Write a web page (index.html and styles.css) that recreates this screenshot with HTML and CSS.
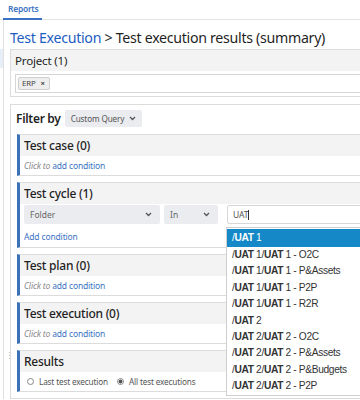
FILE: index.html
```html
<!DOCTYPE html>
<html>
<head>
<meta charset="utf-8">
<link rel="stylesheet" href="styles.css">
</head>
<body>
<div class="tabs"><span class="tab">Reports</span></div>
<div class="layout">
  <div class="sidebar"><div class="side-sel"></div><div class="grip">⋮</div></div>
  <div class="main">
    <h1 class="title"><span class="crumb">Test Execution</span> &gt; Test execution results (summary)</h1>
    <div class="panel project">
      <div class="panel-head">Project (1)</div>
      <div class="project-body">
        <div class="tag-input"><span class="tag">ERP <span class="x">×</span></span></div>
      </div>
    </div>
    <div class="panel filter">
      <div class="filter-head">
        <span class="filter-label">Filter by</span>
        <span class="btn">Custom Query <svg class="chev" width="7" height="5" viewBox="0 0 7 5"><path d="M1 1l2.5 2.5L6 1" fill="none" stroke="#555" stroke-width="1.3"/></svg></span>
      </div>
      <div class="cond">
        <div class="cond-head">Test case (0)</div>
        <div class="cond-body"><span class="hint">Click to</span> <a class="link">add condition</a></div>
      </div>
      <div class="cond">
        <div class="cond-head">Test cycle (1)</div>
        <div class="cycle-body">
          <div class="row">
            <div class="select folder">Folder<svg class="chev" width="7" height="5" viewBox="0 0 7 5"><path d="M1 1l2.5 2.5L6 1" fill="none" stroke="#555" stroke-width="1.3"/></svg></div>
            <div class="select op">In<svg class="chev" width="7" height="5" viewBox="0 0 7 5"><path d="M1 1l2.5 2.5L6 1" fill="none" stroke="#555" stroke-width="1.3"/></svg></div>
            <div class="text-input">UAT<span class="caret"></span></div>
          </div>
          <div class="add"><a class="link">Add condition</a></div>
        </div>
      </div>
      <div class="cond">
        <div class="cond-head">Test plan (0)</div>
        <div class="cond-body"><span class="hint">Click to</span> <a class="link">add condition</a></div>
      </div>
      <div class="cond">
        <div class="cond-head">Test execution (0)</div>
        <div class="cond-body"><span class="hint">Click to</span> <a class="link">add condition</a></div>
      </div>
      <div class="cond">
        <div class="cond-head">Results</div>
        <div class="cond-body radios">
          <label class="radio"><span class="dot"></span>Last test execution</label>
          <label class="radio"><span class="dot on"></span>All test executions</label>
        </div>
      </div>
    </div>
  </div>
</div>
<ul class="dropdown">
  <li class="active">/<b>UAT</b> 1</li>
  <li>/<b>UAT</b> 1/<b>UAT</b> 1 - O2C</li>
  <li>/<b>UAT</b> 1/<b>UAT</b> 1 - P&amp;Assets</li>
  <li>/<b>UAT</b> 1/<b>UAT</b> 1 - P2P</li>
  <li>/<b>UAT</b> 1/<b>UAT</b> 1 - R2R</li>
  <li>/<b>UAT</b> 2</li>
  <li>/<b>UAT</b> 2/<b>UAT</b> 2 - O2C</li>
  <li>/<b>UAT</b> 2/<b>UAT</b> 2 - P&amp;Assets</li>
  <li>/<b>UAT</b> 2/<b>UAT</b> 2 - P&amp;Budgets</li>
  <li>/<b>UAT</b> 2/<b>UAT</b> 2 - P2P</li>
</ul>
</body>
</html>
```
FILE: styles.css
```css
html, body {
  margin: 0;
  padding: 0;
  width: 360px;
  height: 400px;
  overflow: hidden;
  background: #fff;
  font-family: "Noto Sans", "Open Sans", sans-serif;
  color: #172b4d;
}
.tabs {
  height: 19px;
  border-bottom: 1px solid #e3e3e3;
  display: flex;
  padding-left: 3px;
}
.tab {
  font-size: 8.4px;
  font-weight: 600;
  letter-spacing: -0.2px;
  color: #3b73c4;
  padding: 2px 4px 0 5px;
  line-height: 14px;
  border-bottom: 2px solid #3b73c4;
  margin-bottom: -1px;
}
.layout {
  display: flex;
  width: 440px;
}
.sidebar {
  width: 3px;
  border-right: 1px solid #e0e0e0;
  position: relative;
  flex: none;
}
.side-sel {
  margin-top: 29px;
  height: 19px;
  background: #e6eef8;
}
.grip {
  position: absolute;
  left: 5px;
  top: 331px;
  font-size: 9px;
  color: #bbb;
  line-height: 10px;
}
.main {
  flex: 1;
  padding-left: 6px;
}
.title {
  margin: 0;
  padding-top: 8px;
  font-size: 14.2px;
  letter-spacing: -0.3px;
  font-weight: 400;
  line-height: 20px;
  height: 20px;
  color: #1f1f1f;
  white-space: nowrap;
}
.crumb { color: #1e5cc4; }
.panel {
  border: 1px solid #dcdcdc;
  margin-top: 1px;
}
.panel-head {
  background: #f3f3f3;
  height: 21px;
  line-height: 21px;
  font-size: 11.6px;
  letter-spacing: -0.2px;
  padding-left: 4px;
  color: #1f1f1f;
}
.project-body {
  padding: 3px 0 3px 4px;
}
.tag-input {
  border: 1px solid #d6d6d6;
  height: 17px;
  display: flex;
  align-items: center;
  padding-left: 2px;
}
.tag {
  font-size: 7.8px;
  letter-spacing: -0.1px;
  color: #444;
  background: #eeeeee;
  border: 1px solid #cfcfcf;
  border-radius: 2px;
  padding: 0 4px 0 3px;
  line-height: 11px;
}
.tag .x { font-weight: 700; margin-left: 3px; }
.filter {
  margin-top: 7px;
  padding-bottom: 6px;
}
.filter-head {
  display: flex;
  align-items: center;
  height: 26px;
  padding: 0 5px 3px;
}
.filter-label {
  font-size: 12px;
  font-weight: 600;
  letter-spacing: -0.3px;
  color: #1f1f1f;
  margin-right: 4px;
}
.btn {
  background: #ebecf0;
  border-radius: 2px;
  font-size: 8.2px;
  letter-spacing: -0.15px;
  color: #555;
  height: 17px;
  display: flex;
  align-items: center;
  gap: 5px;
  padding: 0 6px;
}
.cond {
  margin: 0 0 6px 6px;
  border: 1px solid #dcdcdc;
  border-left: 3px solid #3b72b8;
}
.cond:last-child { margin-bottom: 0; }
.cond-head {
  background: #f3f3f3;
  height: 21px;
  line-height: 21px;
  font-size: 12px;
  letter-spacing: -0.25px;
  font-weight: 500;
  padding-left: 4px;
  color: #1f1f1f;
}
.cond-body {
  height: 19px;
  line-height: 19px;
  font-size: 8.5px;
  letter-spacing: -0.15px;
  padding-left: 4px;
}
.hint { color: #888; font-style: italic; }
.link { color: #3b73c4; }
.cycle-body { padding: 1px 0 0 4px; }
.row { display: flex; gap: 4px; }
.select {
  background: #ebecf0;
  height: 19px;
  border-radius: 2px;
  font-size: 8.5px;
  color: #666;
  display: flex;
  align-items: center;
  justify-content: space-between;
  padding: 0 8px 0 6px;
  box-sizing: border-box;
}
.folder { width: 136px; }
.op { width: 54px; margin-right: 5px; }
.text-input {
  flex: 1;
  height: 19px;
  box-sizing: border-box;
  border: 1px solid #d6d6d6;
  border-radius: 2px;
  font-size: 8.5px;
  letter-spacing: -0.15px;
  color: #555;
  display: flex;
  align-items: center;
  padding-left: 5px;
}
.caret {
  width: 1px;
  height: 10px;
  background: #333;
  margin-left: 0;
}
.add {
  height: 23px;
  line-height: 25px;
  font-size: 8.5px;
  letter-spacing: -0.15px;
}
.radios {
  display: flex;
  gap: 9px;
  align-items: center;
  color: #555;
  padding-left: 7px;
  font-size: 8.2px;
  letter-spacing: -0.15px;
}
.radio { display: flex; align-items: center; gap: 5px; }
.dot {
  width: 7px;
  height: 7px;
  border: 1px solid #888;
  border-radius: 50%;
  box-sizing: border-box;
  display: inline-block;
}
.dot.on { background: radial-gradient(circle, #555 0 1.8px, #fff 2.2px); }
.dropdown {
  position: absolute;
  left: 226px;
  top: 227px;
  width: 160px;
  margin: 0;
  padding: 1px 0 0;
  list-style: none;
  background: #fff;
  border: 1px solid #cfcfcf;
  font-family: "Liberation Sans", Arial, sans-serif;
  font-size: 10.2px;
  letter-spacing: -0.35px;
  color: #333;
}
.dropdown li {
  height: 16.4px;
  line-height: 16.4px;
  padding-left: 5px;
  white-space: nowrap;
}
.dropdown li.active {
  background: #1589c8;
  color: #fff;
  height: 18px;
  line-height: 18px;
}
```
